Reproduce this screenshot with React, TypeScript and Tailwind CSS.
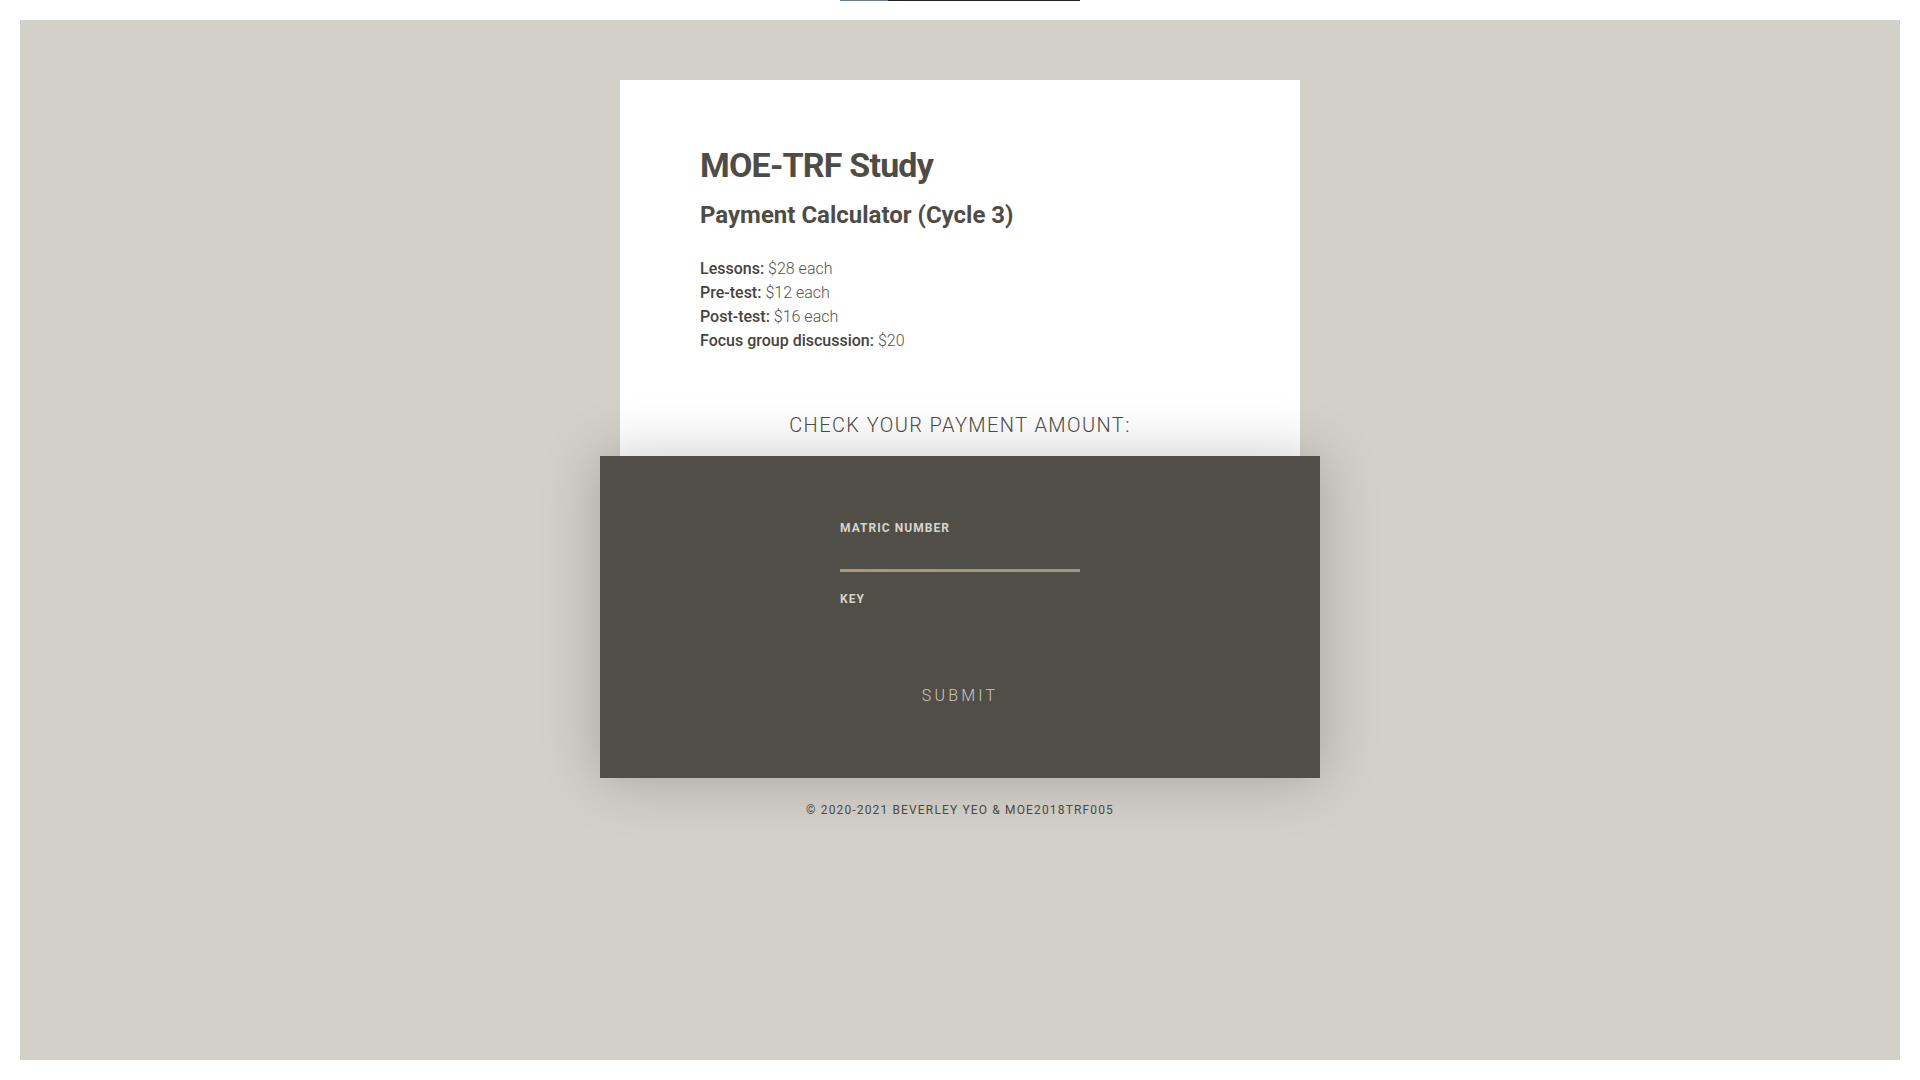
export default function App() {
  return (
    <div className="min-h-screen bg-white px-5 pb-5" style={{ fontFamily: "Roboto, 'Open Sans', sans-serif" }}>
      {/* thin bar at the very top */}
      <div className="flex h-px justify-center">
        <div className="h-px w-[48px] bg-[#6b7b91]" />
        <div className="h-px w-[192px] bg-[#222222]" />
      </div>
      <div className="h-[19px]" />

      <div className="flex h-[1040px] flex-col items-center bg-[#d3d0c9] pt-[60px]">
        <div className="flex w-[720px] flex-col items-center">
          <div className="w-[680px] bg-white px-20 pt-[65px] pb-[16px] text-[#4f4b45]">
            <h1 className="text-[34px] leading-[1.2] font-bold tracking-[-0.8px]">MOE-TRF Study</h1>
            <h2 className="mt-[15px] text-[24px] leading-[1.2] font-bold">Payment Calculator (Cycle 3)</h2>
            <ul className="mt-[27px] text-[16px] leading-6 text-[#56524c]">
              <li>
                <span className="font-medium text-[#47433d]">Lessons:</span> <span className="font-light">$28 each</span>
              </li>
              <li>
                <span className="font-medium text-[#47433d]">Pre-test:</span> <span className="font-light">$12 each</span>
              </li>
              <li>
                <span className="font-medium text-[#47433d]">Post-test:</span> <span className="font-light">$16 each</span>
              </li>
              <li>
                <span className="font-medium text-[#47433d]">Focus group discussion:</span> <span className="font-light">$20</span>
              </li>
            </ul>
            <p className="mt-[57px] text-center text-[20px] leading-[30px] font-light tracking-[1.4px] text-[#4f4b45]">
              CHECK YOUR PAYMENT AMOUNT:
            </p>
          </div>

          <div className="relative z-10 w-[720px] bg-[#514e47] pt-16 pb-[70px] shadow-[0_0_55px_rgba(0,0,0,0.22)]">
            <form className="mx-auto flex w-[240px] flex-col" onSubmit={(e) => e.preventDefault()}>
              <label className="text-[12px] leading-4 font-bold tracking-[1.05px] text-[#d8d4cc]">MATRIC NUMBER</label>
              <input
                className="h-[36px] w-full border-b-[3px] border-transparent bg-transparent text-[#e5e2dc] outline-none"
                style={{ borderImage: "linear-gradient(90deg, #a8957e, #9d9783) 1" }}
              />
              <label className="mt-[19px] text-[12px] leading-4 font-bold tracking-[1.05px] text-[#d8d4cc]">KEY</label>
              <input className="h-[36px] w-full bg-transparent text-[#e5e2dc] outline-none" type="password" />
              <button
                type="submit"
                className="mt-[41px] text-center text-[16px] leading-6 font-light tracking-[3.2px] text-[#cbc7bf]"
              >
                SUBMIT
              </button>
            </form>
          </div>

          <p className="mt-[24px] text-[12px] leading-4 tracking-[1.15px] text-[#4f4b45]">
            © 2020-2021 BEVERLEY YEO &amp; MOE2018TRF005
          </p>
        </div>
      </div>
    </div>
  );
}
